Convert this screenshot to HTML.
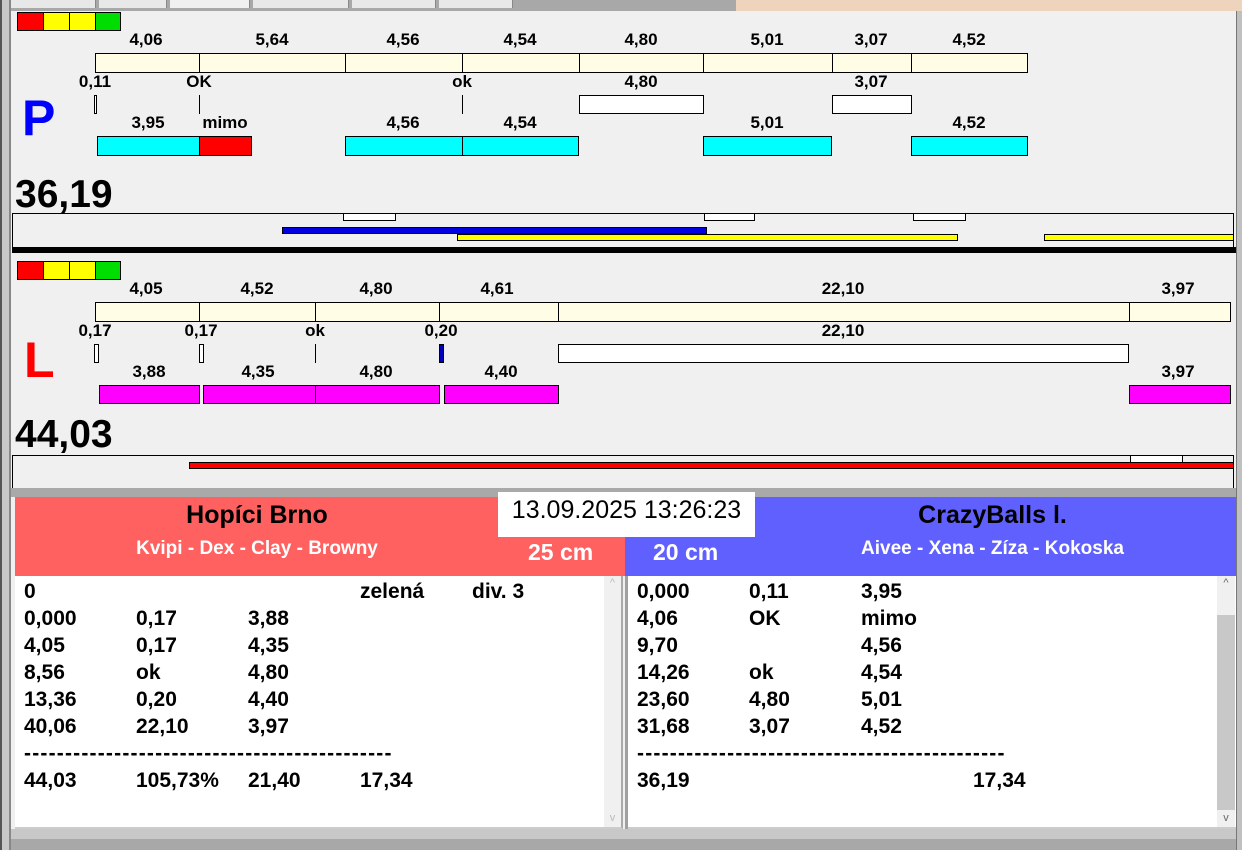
<!DOCTYPE html>
<html><head><meta charset="utf-8"><style>
*{margin:0;padding:0;box-sizing:border-box}
body{width:1242px;height:850px;position:relative;overflow:hidden;background:#f0f0f0;font-family:"Liberation Sans",Arial,sans-serif}
div{position:absolute}
.b{border:1px solid #000}
.cr{background:#fffde6}
.cy{background:#00ffff}
.mg{background:#ff00ff}
.w{background:#fff}
.l{font-weight:bold;font-size:17px;color:#000;transform:translateX(-50%);white-space:nowrap;line-height:18px}
.t{font-weight:bold;font-size:21px;line-height:27px;white-space:nowrap}
</style></head><body>
<!-- top tabs -->
<div style="left:0;top:0;width:1242px;height:11px;background:#a8a8a8"></div>
<div style="left:736px;top:0;width:506px;height:11px;background:#eed4bc"></div>
<div style="left:10px;top:0;width:86px;height:8px;background:#e8e8e8;border-right:1px solid #888"></div>
<div style="left:99px;top:0;width:68px;height:8px;background:#e8e8e8;border-right:1px solid #888"></div>
<div style="left:170px;top:0;width:80px;height:8px;background:#f0f0f0;border-right:1px solid #888"></div>
<div style="left:253px;top:0;width:96px;height:8px;background:#e8e8e8;border-right:1px solid #888"></div>
<div style="left:352px;top:0;width:84px;height:8px;background:#e8e8e8;border-right:1px solid #888"></div>
<div style="left:439px;top:0;width:74px;height:8px;background:#e8e8e8;border-right:1px solid #888"></div>
<!-- left border -->
<div style="left:0;top:0;width:11px;height:850px;background:#c8c8c8;border-left:2px solid #555;border-right:2px solid #888"></div>
<div style="left:1236px;top:11px;width:6px;height:839px;background:#c0c0c0;border-left:1px solid #777"></div>

<!-- P panel -->
<div class="b" style="left:17px;top:12px;width:27px;height:19px;background:#f00"></div>
<div class="b" style="left:43px;top:12px;width:27px;height:19px;background:#ff0"></div>
<div class="b" style="left:69px;top:12px;width:27px;height:19px;background:#ff0"></div>
<div class="b" style="left:95px;top:12px;width:26px;height:19px;background:#0d0"></div>

<div class="l" style="left:146px;top:31px">4,06</div>
<div class="l" style="left:272px;top:31px">5,64</div>
<div class="l" style="left:403px;top:31px">4,56</div>
<div class="l" style="left:520px;top:31px">4,54</div>
<div class="l" style="left:641px;top:31px">4,80</div>
<div class="l" style="left:767px;top:31px">5,01</div>
<div class="l" style="left:871px;top:31px">3,07</div>
<div class="l" style="left:969px;top:31px">4,52</div>
<div class="b cr" style="left:95px;top:53px;width:105px;height:20px"></div>
<div class="b cr" style="left:199px;top:53px;width:147px;height:20px"></div>
<div class="b cr" style="left:345px;top:53px;width:118px;height:20px"></div>
<div class="b cr" style="left:462px;top:53px;width:118px;height:20px"></div>
<div class="b cr" style="left:579px;top:53px;width:125px;height:20px"></div>
<div class="b cr" style="left:703px;top:53px;width:130px;height:20px"></div>
<div class="b cr" style="left:832px;top:53px;width:80px;height:20px"></div>
<div class="b cr" style="left:911px;top:53px;width:117px;height:20px"></div>

<div class="l" style="left:95px;top:73px">0,11</div>
<div class="l" style="left:199px;top:73px">OK</div>
<div class="l" style="left:462px;top:73px">ok</div>
<div class="l" style="left:641px;top:73px">4,80</div>
<div class="l" style="left:871px;top:73px">3,07</div>
<div class="b w" style="left:94px;top:95px;width:3px;height:19px"></div>
<div style="left:199px;top:95px;width:1px;height:19px;background:#000"></div>
<div style="left:462px;top:95px;width:1px;height:19px;background:#000"></div>
<div class="b w" style="left:579px;top:95px;width:125px;height:19px"></div>
<div class="b w" style="left:832px;top:95px;width:80px;height:19px"></div>
<div style="left:22px;top:88px;font-size:50px;font-weight:bold;color:#0000ff;line-height:60px">P</div>

<div class="l" style="left:148px;top:114px">3,95</div>
<div class="l" style="left:225px;top:114px">mimo</div>
<div class="l" style="left:403px;top:114px">4,56</div>
<div class="l" style="left:520px;top:114px">4,54</div>
<div class="l" style="left:767px;top:114px">5,01</div>
<div class="l" style="left:969px;top:114px">4,52</div>
<div class="b cy" style="left:97px;top:136px;width:103px;height:20px"></div>
<div class="b" style="left:199px;top:136px;width:53px;height:20px;background:#f00"></div>
<div class="b cy" style="left:345px;top:136px;width:118px;height:20px"></div>
<div class="b cy" style="left:462px;top:136px;width:117px;height:20px"></div>
<div class="b cy" style="left:703px;top:136px;width:129px;height:20px"></div>
<div class="b cy" style="left:911px;top:136px;width:117px;height:20px"></div>

<div style="left:15px;top:173px;font-size:39px;font-weight:bold;line-height:44px">36,19</div>
<div style="left:12px;top:213px;width:1222px;height:35px;border-top:1px solid #000;border-right:1px solid #000;border-left:1px solid #000"></div>
<div class="b w" style="left:343px;top:213px;width:53px;height:8px"></div>
<div class="b w" style="left:704px;top:213px;width:51px;height:8px"></div>
<div class="b w" style="left:913px;top:213px;width:53px;height:8px"></div>
<div class="b" style="left:282px;top:227px;width:425px;height:7px;background:#0000e0"></div>
<div class="b" style="left:457px;top:234px;width:501px;height:7px;background:#ff0"></div>
<div class="b" style="left:1044px;top:234px;width:190px;height:7px;background:#ff0"></div>
<div style="left:12px;top:247px;width:1224px;height:6px;background:#000"></div>

<!-- L panel -->
<div class="b" style="left:17px;top:261px;width:27px;height:19px;background:#f00"></div>
<div class="b" style="left:43px;top:261px;width:27px;height:19px;background:#ff0"></div>
<div class="b" style="left:69px;top:261px;width:27px;height:19px;background:#ff0"></div>
<div class="b" style="left:95px;top:261px;width:26px;height:19px;background:#0d0"></div>

<div class="l" style="left:146px;top:280px">4,05</div>
<div class="l" style="left:257px;top:280px">4,52</div>
<div class="l" style="left:376px;top:280px">4,80</div>
<div class="l" style="left:497px;top:280px">4,61</div>
<div class="l" style="left:843px;top:280px">22,10</div>
<div class="l" style="left:1178px;top:280px">3,97</div>
<div class="b cr" style="left:95px;top:302px;width:105px;height:20px"></div>
<div class="b cr" style="left:199px;top:302px;width:117px;height:20px"></div>
<div class="b cr" style="left:315px;top:302px;width:125px;height:20px"></div>
<div class="b cr" style="left:439px;top:302px;width:120px;height:20px"></div>
<div class="b cr" style="left:558px;top:302px;width:572px;height:20px"></div>
<div class="b cr" style="left:1129px;top:302px;width:102px;height:20px"></div>

<div class="l" style="left:95px;top:322px">0,17</div>
<div class="l" style="left:201px;top:322px">0,17</div>
<div class="l" style="left:315px;top:322px">ok</div>
<div class="l" style="left:441px;top:322px">0,20</div>
<div class="l" style="left:843px;top:322px">22,10</div>
<div class="b w" style="left:94px;top:344px;width:5px;height:19px"></div>
<div class="b w" style="left:199px;top:344px;width:5px;height:19px"></div>
<div style="left:315px;top:344px;width:1px;height:19px;background:#000"></div>
<div class="b" style="left:439px;top:344px;width:5px;height:19px;background:#0000c0"></div>
<div class="b w" style="left:558px;top:344px;width:571px;height:19px"></div>
<div style="left:24px;top:332px;font-size:50px;font-weight:bold;color:#f00;line-height:56px">L</div>

<div class="l" style="left:149px;top:363px">3,88</div>
<div class="l" style="left:258px;top:363px">4,35</div>
<div class="l" style="left:376px;top:363px">4,80</div>
<div class="l" style="left:501px;top:363px">4,40</div>
<div class="l" style="left:1178px;top:363px">3,97</div>
<div class="b mg" style="left:99px;top:385px;width:101px;height:19px"></div>
<div class="b mg" style="left:203px;top:385px;width:113px;height:19px"></div>
<div class="b mg" style="left:315px;top:385px;width:125px;height:19px"></div>
<div class="b mg" style="left:444px;top:385px;width:115px;height:19px"></div>
<div class="b mg" style="left:1129px;top:385px;width:102px;height:19px"></div>

<div style="left:15px;top:413px;font-size:39px;font-weight:bold;line-height:44px">44,03</div>
<div style="left:12px;top:455px;width:1222px;height:34px;border-top:1px solid #000;border-right:1px solid #000;border-left:1px solid #000"></div>
<div class="b w" style="left:1130px;top:455px;width:53px;height:8px"></div>
<div class="b" style="left:189px;top:462px;width:1045px;height:7px;background:#f00"></div>

<!-- separator -->
<div style="left:11px;top:488px;width:1225px;height:9px;background:#a9a9a9"></div>

<!-- headers -->
<div style="left:15px;top:497px;width:610px;height:79px;background:#ff6060"></div>
<div style="left:625px;top:497px;width:611px;height:79px;background:#6060ff"></div>
<div style="left:498px;top:492px;width:257px;height:45px;background:#fff;font-size:25px;line-height:36px;text-align:center">13.09.2025 13:26:23</div>
<div style="left:15px;top:497px;width:484px;text-align:center;font-size:25px;font-weight:bold;line-height:36px">Hopíci Brno</div>
<div style="left:755px;top:497px;width:475px;text-align:center;font-size:25px;font-weight:bold;line-height:36px">CrazyBalls l.</div>
<div style="left:15px;top:537px;width:484px;text-align:center;font-size:19px;font-weight:bold;color:#fff;line-height:24px">Kvipi - Dex - Clay - Browny</div>
<div style="left:755px;top:537px;width:475px;text-align:center;font-size:19px;font-weight:bold;color:#fff;line-height:24px">Aivee - Xena - Zíza - Kokoska</div>
<div style="left:528px;top:538px;font-size:23px;font-weight:bold;color:#fff;line-height:28px">25 cm</div>
<div style="left:653px;top:538px;font-size:23px;font-weight:bold;color:#fff;line-height:28px">20 cm</div>

<!-- text boxes -->
<div style="left:15px;top:576px;width:608px;height:253px;background:#fff;border-right:2px solid #aaa;border-bottom:2px solid #ccc"></div>
<div style="left:604px;top:576px;width:17px;height:251px;background:#f0f0f0;color:#bbb;font-size:11px;text-align:center;line-height:14px">^</div>
<div style="left:604px;top:812px;width:17px;height:14px;color:#bbb;font-size:11px;text-align:center">v</div>
<div style="left:625px;top:576px;width:3px;height:253px;background:#a0a0a0"></div>
<div style="left:628px;top:576px;width:608px;height:253px;background:#fff;border-bottom:2px solid #ccc"></div>
<div style="left:1217px;top:576px;width:18px;height:251px;background:#f0f0f0;color:#666;font-size:11px;text-align:center;line-height:14px">^</div>
<div style="left:1217px;top:615px;width:18px;height:195px;background:#c8c8c8"></div>
<div style="left:1217px;top:812px;width:18px;height:14px;color:#666;font-size:11px;text-align:center">v</div>
<div style="left:11px;top:829px;width:1225px;height:21px;background:#c8c8c8;border-bottom:11px solid #a8a8a8"></div>

<div class="t" style="left:24px;top:578px">0</div>
<div class="t" style="left:360px;top:578px">zelená</div>
<div class="t" style="left:472px;top:578px">div. 3</div>
<div class="t" style="left:24px;top:605px">0,000</div><div class="t" style="left:136px;top:605px">0,17</div><div class="t" style="left:248px;top:605px">3,88</div>
<div class="t" style="left:24px;top:632px">4,05</div><div class="t" style="left:136px;top:632px">0,17</div><div class="t" style="left:248px;top:632px">4,35</div>
<div class="t" style="left:24px;top:659px">8,56</div><div class="t" style="left:136px;top:659px">ok</div><div class="t" style="left:248px;top:659px">4,80</div>
<div class="t" style="left:24px;top:686px">13,36</div><div class="t" style="left:136px;top:686px">0,20</div><div class="t" style="left:248px;top:686px">4,40</div>
<div class="t" style="left:24px;top:713px">40,06</div><div class="t" style="left:136px;top:713px">22,10</div><div class="t" style="left:248px;top:713px">3,97</div>
<div class="t" style="left:24px;top:740px;letter-spacing:1.2px">---------------------------------------------</div>
<div class="t" style="left:24px;top:767px">44,03</div><div class="t" style="left:136px;top:767px">105,73%</div><div class="t" style="left:248px;top:767px">21,40</div><div class="t" style="left:360px;top:767px">17,34</div>

<div class="t" style="left:637px;top:578px">0,000</div><div class="t" style="left:749px;top:578px">0,11</div><div class="t" style="left:861px;top:578px">3,95</div>
<div class="t" style="left:637px;top:605px">4,06</div><div class="t" style="left:749px;top:605px">OK</div><div class="t" style="left:861px;top:605px">mimo</div>
<div class="t" style="left:637px;top:632px">9,70</div><div class="t" style="left:861px;top:632px">4,56</div>
<div class="t" style="left:637px;top:659px">14,26</div><div class="t" style="left:749px;top:659px">ok</div><div class="t" style="left:861px;top:659px">4,54</div>
<div class="t" style="left:637px;top:686px">23,60</div><div class="t" style="left:749px;top:686px">4,80</div><div class="t" style="left:861px;top:686px">5,01</div>
<div class="t" style="left:637px;top:713px">31,68</div><div class="t" style="left:749px;top:713px">3,07</div><div class="t" style="left:861px;top:713px">4,52</div>
<div class="t" style="left:637px;top:740px;letter-spacing:1.2px">---------------------------------------------</div>
<div class="t" style="left:637px;top:767px">36,19</div><div class="t" style="left:973px;top:767px">17,34</div>
</body></html>
